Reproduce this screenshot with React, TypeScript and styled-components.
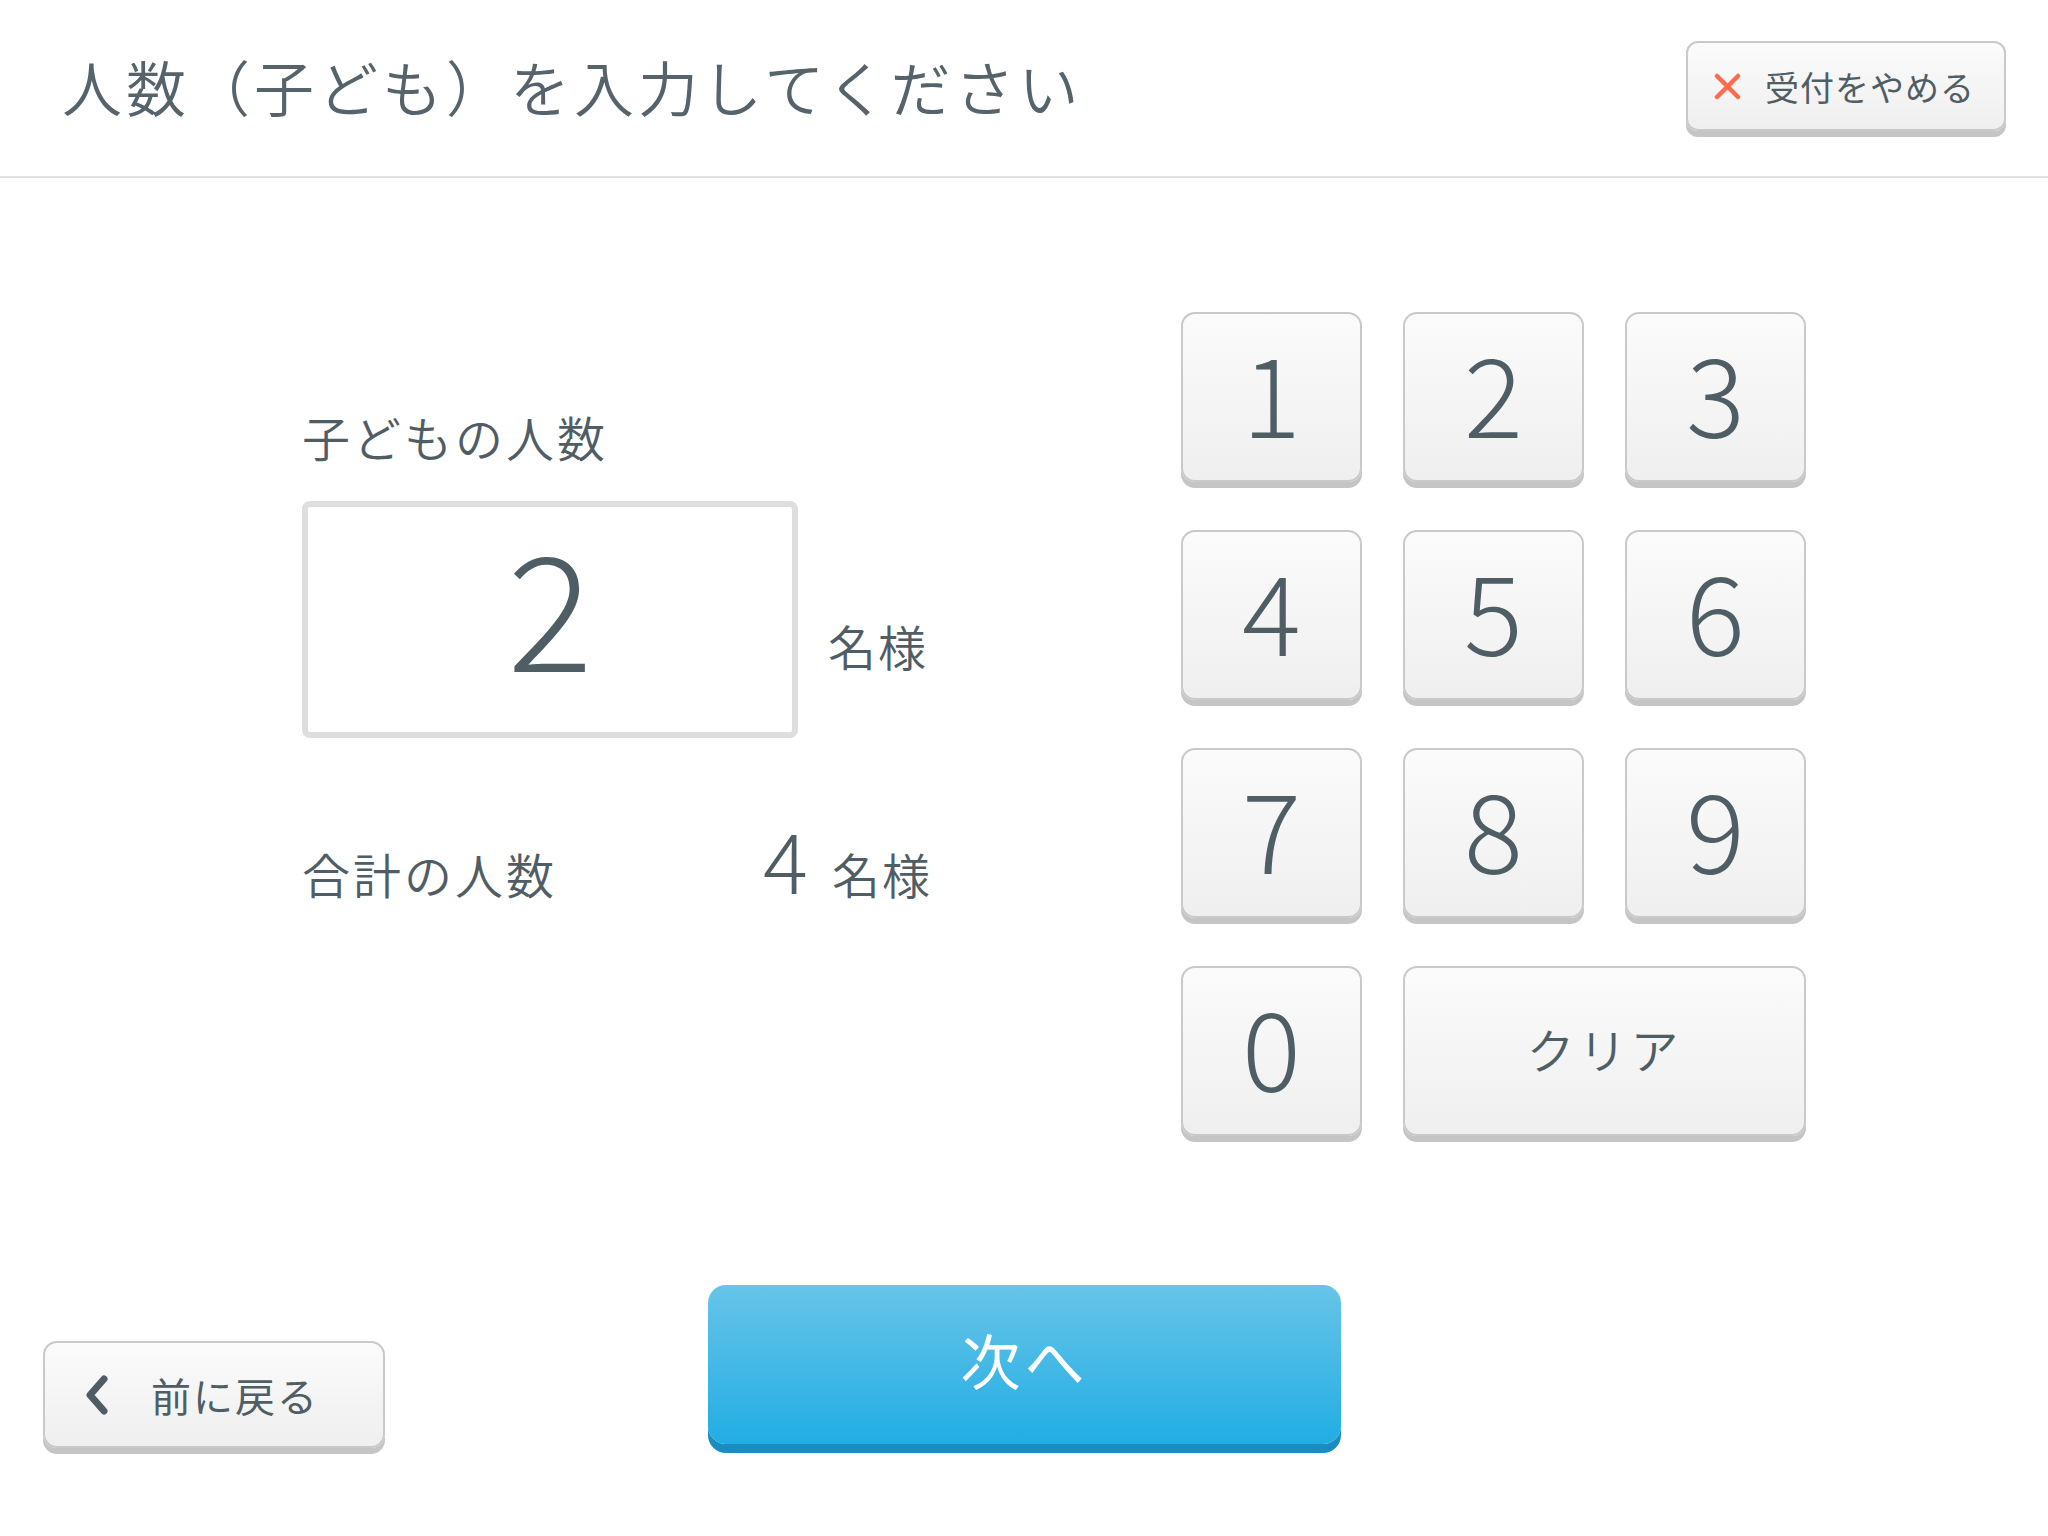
import React from 'react'
import styled, { createGlobalStyle } from 'styled-components'

const keys = ['1', '2', '3', '4', '5', '6', '7', '8', '9', '0']

const App = () => {
  return (
    <Page>
      <GlobalStyle />
      <Header>
        <Title>人数（子ども）を入力してください</Title>
        <CancelButton>
          <svg width="27" height="27" viewBox="0 0 27 27">
            <path d="M3 3 L24 24 M24 3 L3 24" stroke="#ff6a4d" strokeWidth="4.5" strokeLinecap="round" />
          </svg>
          <span>受付をやめる</span>
        </CancelButton>
      </Header>
      <Body>
        <LeftColumn>
          <FieldLabel>子どもの人数</FieldLabel>
          <InputRow>
            <NumberBox>2</NumberBox>
            <Unit $shift>名様</Unit>
          </InputRow>
          <TotalRow>
            <FieldLabel>合計の人数</FieldLabel>
            <TotalCount>4</TotalCount>
            <Unit>名様</Unit>
          </TotalRow>
        </LeftColumn>
        <Keypad>
          {keys.map((k) => (
            <Key key={k}>{k}</Key>
          ))}
          <Key $wide $text>クリア</Key>
        </Keypad>
      </Body>
      <Footer>
        <BackButton>
          <svg width="24" height="40" viewBox="0 0 24 40">
            <path d="M19 4 L5 20 L19 36" fill="none" stroke="#4f5c63" strokeWidth="7" strokeLinecap="round" strokeLinejoin="round" />
          </svg>
          <span>前に戻る</span>
        </BackButton>
        <NextButton>次へ</NextButton>
      </Footer>
    </Page>
  )
}

export default App

const GlobalStyle = createGlobalStyle`
  html, body {
    margin: 0;
    padding: 0;
    background: #ffffff;
  }
  body {
    font-family: "Noto Sans CJK JP", "Noto Sans", sans-serif;
    font-weight: 350;
    color: #505d64;
  }
`

const Page = styled.div`
  width: 2048px;
  height: 1536px;
  display: flex;
  flex-direction: column;
  background: #ffffff;
  overflow: hidden;
`

const Header = styled.div`
  height: 176px;
  border-bottom: 2px solid #e1e1e1;
  display: flex;
  align-items: center;
  justify-content: space-between;
  padding: 0 42px 0 62px;
`

const Title = styled.div`
  font-size: 60px;
  letter-spacing: 4px;
  color: #56636a;
  line-height: 1;
  padding-bottom: 4px;
`

const GreyButton = styled.div`
  display: flex;
  align-items: center;
  box-sizing: border-box;
  border: 2px solid #c9c9c9;
  background: linear-gradient(#fbfbfb, #efefef);
  box-shadow: 0 6px 0 #c5c5c5;
  color: #505d64;
`

const CancelButton = styled(GreyButton)`
  height: 90px;
  width: 320px;
  border-radius: 12px;
  padding: 0 0 0 26px;
  gap: 24px;
  margin-bottom: 4px;
  font-size: 34px;
  font-weight: 400;
  letter-spacing: 1px;
`

const Body = styled.div`
  flex: 1;
  display: flex;
  padding: 134px 0 0 302px;
`

const LeftColumn = styled.div`
  width: 879px;
  padding-top: 92px;
  display: flex;
  flex-direction: column;
`

const FieldLabel = styled.div`
  font-size: 48px;
  letter-spacing: 3px;
  line-height: 64px;
`

const InputRow = styled.div`
  display: flex;
  align-items: center;
  margin-top: 33px;
  gap: 30px;
`

const NumberBox = styled.div`
  width: 496px;
  height: 237px;
  box-sizing: border-box;
  border: 6px solid #dedede;
  border-radius: 8px;
  display: flex;
  align-items: center;
  justify-content: center;
  font-size: 160px;
  font-weight: 300;
  line-height: 1;
  padding-bottom: 36px;
  color: #4f5d64;
`

const Unit = styled.div<{ $shift?: boolean }>`
  font-size: 48px;
  letter-spacing: 2px;
  line-height: 64px;
  padding-top: ${(p) => (p.$shift ? '50px' : '0')};
`

const TotalRow = styled.div`
  display: flex;
  align-items: baseline;
  width: 630px;
  margin-top: 78px;

  & > ${FieldLabel} {
    flex: 1;
  }
`

const TotalCount = styled.div`
  font-size: 84px;
  font-weight: 300;
  line-height: 1;
  margin-right: 24px;
`

const Keypad = styled.div`
  display: grid;
  grid-template-columns: repeat(3, 181px);
  grid-auto-rows: 170px;
  column-gap: 41px;
  row-gap: 48px;
  align-content: start;
`

const Key = styled(GreyButton)<{ $wide?: boolean; $text?: boolean }>`
  grid-column: ${(p) => (p.$wide ? 'span 2' : 'auto')};
  justify-content: center;
  border-radius: 14px;
  font-size: ${(p) => (p.$text ? '48px' : '110px')};
  font-weight: ${(p) => (p.$text ? 350 : 300)};
  letter-spacing: ${(p) => (p.$text ? '4px' : '0')};
  line-height: 1;
  padding-bottom: ${(p) => (p.$text ? '6px' : '14px')};
  color: #4f5d64;
`

const Footer = styled.div`
  display: flex;
  align-items: flex-end;
  padding: 0 0 88px 43px;
`

const BackButton = styled(GreyButton)`
  width: 342px;
  height: 107px;
  border-radius: 14px;
  padding-left: 40px;
  gap: 42px;
  font-size: 40px;
  font-weight: 400;
  letter-spacing: 2px;
`

const NextButton = styled.div`
  width: 633px;
  height: 159px;
  margin: 0 0 4px 323px;
  border-radius: 18px;
  background: linear-gradient(#68c4e8, #21ade4);
  box-shadow: 0 9px 0 #1b8cbf;
  display: flex;
  align-items: center;
  justify-content: center;
  color: #ffffff;
  font-size: 60px;
  font-weight: 400;
  letter-spacing: 4px;
  padding-bottom: 12px;
  box-sizing: border-box;
`
